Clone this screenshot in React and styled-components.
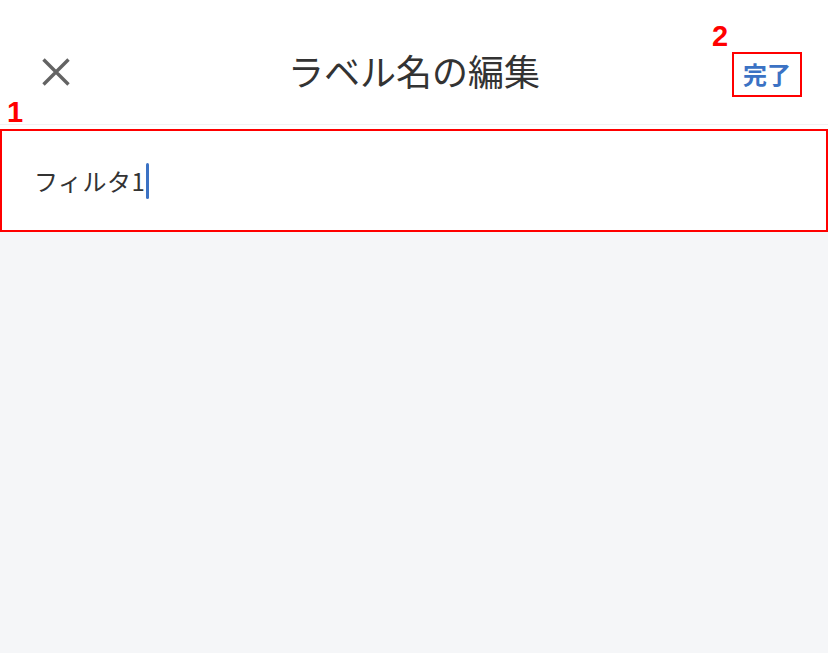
import React from "react";
import styled, { createGlobalStyle } from "styled-components";

const GlobalStyle = createGlobalStyle`
  html, body { margin: 0; padding: 0; }
  body {
    background: #f5f6f8;
    font-family: "Noto Sans CJK JP", "Noto Sans", sans-serif;
  }
`;

const Page = styled.div`
  width: 828px;
  height: 653px;
  display: flex;
  flex-direction: column;
  background: #f5f6f8;
  overflow: hidden;
`;

const Header = styled.header`
  height: 125px;
  box-sizing: border-box;
  padding-top: 20px;
  display: grid;
  grid-template-columns: 1fr auto 1fr;
  align-items: center;
  background: #fff;
  border-bottom: 1px solid #f1f2f4;
`;

const CloseButton = styled.button`
  justify-self: start;
  margin-left: 41px;
  width: 30px;
  height: 30px;
  padding: 0;
  border: 0;
  background: transparent;
  display: flex;
  align-items: center;
  justify-content: center;
`;

const Title = styled.h1`
  margin: 0;
  font-size: 36px;
  font-weight: 400;
  color: #333;
  line-height: 1;
  transform: translateY(-2px);
`;

const DoneWrap = styled.div`
  justify-self: end;
  margin-right: 26px;
  position: relative;
`;

const DoneButton = styled.button`
  width: 70px;
  height: 45px;
  box-sizing: border-box;
  border: 2px solid #f00;
  background: #fff;
  padding: 0;
  font-family: "Noto Sans CJK JP", sans-serif;
  font-size: 24px;
  font-weight: 700;
  color: #3b72c4;
  line-height: 1;
  display: flex;
  align-items: center;
  justify-content: center;
  transform: translateY(2px);
`;

const Marker = styled.span`
  position: absolute;
  left: ${(p) => p.$left}px;
  top: ${(p) => p.$top}px;
  font-family: "Liberation Sans", Arial, sans-serif;
  font-weight: 700;
  font-size: 29px;
  line-height: 1;
  color: #f00;
`;

const Gap = styled.div`
  height: 4px;
  background: #fff;
`;

const FieldRow = styled.div`
  position: relative;
  height: 103px;
  box-sizing: border-box;
  border: 2px solid #f00;
  background: #fff;
  display: flex;
  align-items: center;
  padding-left: 32px;
`;

const FieldText = styled.span`
  font-size: 24px;
  color: #333;
  line-height: 1;
  letter-spacing: 0.5px;
`;

const Caret = styled.span`
  display: inline-block;
  width: 3px;
  height: 36px;
  margin-left: 1px;
  background: #3b72c4;
  border-radius: 1.5px;
`;

const CloseIcon = () => (
  <svg width="30" height="30" viewBox="0 0 30 30">
    <path
      d="M2.5 2.5 L27.5 27.5 M27.5 2.5 L2.5 27.5"
      stroke="#636363"
      strokeWidth="3.4"
      strokeLinecap="butt"
      fill="none"
    />
  </svg>
);

export default function App() {
  return (
    <>
      <GlobalStyle />
      <Page>
        <Header>
          <CloseButton aria-label="閉じる">
            <CloseIcon />
          </CloseButton>
          <Title>ラベル名の編集</Title>
          <DoneWrap>
            <Marker $left={-20} $top={-28}>2</Marker>
            <DoneButton>完了</DoneButton>
          </DoneWrap>
        </Header>
        <Gap />
        <FieldRow>
          <Marker $left={5} $top={-33}>1</Marker>
          <FieldText>フィルタ1</FieldText>
          <Caret />
        </FieldRow>
      </Page>
    </>
  );
}
